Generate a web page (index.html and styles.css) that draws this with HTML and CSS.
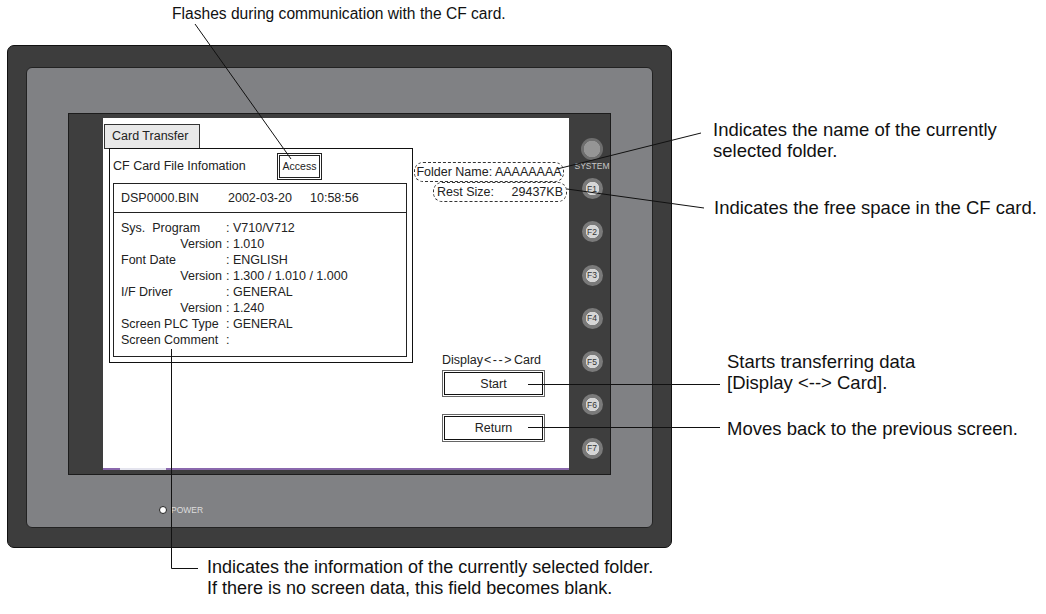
FILE: index.html
```html
<!DOCTYPE html>
<html lang="en">
<head>
  <meta charset="UTF-8" />
  <title>Card Transfer</title>
  <link rel="stylesheet" href="styles.css">
</head>
<body>
  <div class="page">
    <div class="device">
      <div class="bezel">
        <div class="frame">
          <div class="screen">
            <div class="screen-body">
              <div class="left">
                <div class="tab">Card Transfer</div>
                <div class="panel">
                  <div class="panel-head">
                    <span class="head-title">CF Card File Infomation</span>
                    <span class="access">Access</span>
                  </div>
                  <div class="file-row">
                    <span class="file-name">DSP0000.BIN</span>
                    <span class="file-date">2002-03-20</span>
                    <span>10:58:56</span>
                  </div>
                  <div class="info">
                    <div class="row"><span class="k">Sys.&nbsp; Program</span><span>: V710/V712</span></div>
                    <div class="row"><span class="k sub">Version</span><span>: 1.010</span></div>
                    <div class="row"><span class="k">Font Date</span><span>: ENGLISH</span></div>
                    <div class="row"><span class="k sub">Version</span><span>: 1.300 / 1.010 / 1.000</span></div>
                    <div class="row"><span class="k">I/F Driver</span><span>: GENERAL</span></div>
                    <div class="row"><span class="k sub">Version</span><span>: 1.240</span></div>
                    <div class="row"><span class="k">Screen PLC Type</span><span>: GENERAL</span></div>
                    <div class="row"><span class="k">Screen Comment</span><span>:</span></div>
                  </div>
                </div>
              </div>
              <div class="right">
                <div class="dash folder">Folder Name: AAAAAAAA</div>
                <div class="dash rest"><span>Rest Size:</span><span>29437KB</span></div>
                <div class="transfer">Display<span class="arrow">&lt;--&gt;</span>Card</div>
                <div class="btn">Start</div>
                <div class="btn btn-return">Return</div>
              </div>
            </div>
            <div class="screen-bar"></div>
          </div>
          <div class="keys">
            <div class="key key-system"></div>
            <div class="key-label">SYSTEM</div>
            <div class="key first">F1</div>
            <div class="key">F2</div>
            <div class="key">F3</div>
            <div class="key">F4</div>
            <div class="key">F5</div>
            <div class="key">F6</div>
            <div class="key">F7</div>
          </div>
        </div>
        <div class="power"><span class="led"></span>POWER</div>
      </div>
    </div>

    <p class="note note-top">Flashes during communication with the CF card.</p>
    <p class="note note-side note-folder">Indicates the name of the currently<br>selected folder.</p>
    <p class="note note-side note-free">Indicates the free space in the CF card.</p>
    <p class="note note-side note-start">Starts transferring data<br>[Display &lt;--&gt; Card].</p>
    <p class="note note-side note-return">Moves back to the previous screen.</p>
    <p class="note note-info">Indicates the information of the currently selected folder.<br>If there is no screen data, this field becomes blank.</p>

    <svg class="leaders" width="1046" height="614" viewBox="0 0 1046 614">
      <g stroke="#111" stroke-width="1" fill="none">
        <line x1="195" y1="24" x2="291" y2="159" />
        <line x1="557" y1="169" x2="701" y2="133" />
        <line x1="567" y1="189" x2="704" y2="208" />
        <line x1="528" y1="384.5" x2="720" y2="384.5" />
        <line x1="528" y1="427.5" x2="720" y2="427.5" />
        <polyline points="171.5,349 171.5,568.5 198,568.5" />
      </g>
    </svg>
  </div>
</body>
</html>
```

FILE: styles.css
```css
* {
  box-sizing: border-box;
}

body {
  margin: 0;
  background: #ffffff;
  font-family: "Liberation Sans", Arial, sans-serif;
  color: #1c1c1c;
}

.page {
  position: relative;
  width: 1046px;
  height: 614px;
  padding: 45px 0 0 7px;
  overflow: hidden;
}

/* device body */

.device {
  width: 665px;
  height: 503px;
  padding: 21px 0 0 18px;
  background: #3d3d3d;
  border: 1px solid #111;
  border-radius: 7px;
}

.bezel {
  width: 627px;
  height: 461px;
  padding: 45px 0 0 41px;
  background: #808184;
  border: 1px solid #222;
  border-radius: 6px;
}

.frame {
  display: flex;
  width: 543px;
  height: 362px;
  padding: 4px 0 0 34px;
  background: #3e3e3e;
  border: 1px solid #1c1c1c;
}

.screen {
  display: flex;
  flex-direction: column;
  width: 466px;
  height: 352px;
  background: #ffffff;
}

.screen-body {
  flex: 1;
  display: flex;
  font-size: 12.5px;
  color: #222;
}

.screen-bar {
  height: 2px;
  background: linear-gradient(to right, #8a68ad 17px, #e4e4ee 17px 63px, #8a68ad 63px);
}

.left {
  width: 310px;
  padding-top: 6px;
}

.tab {
  width: 96px;
  height: 25px;
  margin-left: 1px;
  padding-left: 7px;
  line-height: 23px;
  background: #e8e8e8;
  border: 1px solid #333;
}

.panel {
  width: 304px;
  height: 215px;
  margin: -1px 0 0 6px;
  padding: 0 5px 0 3px;
  border: 1px solid #111;
}

.panel-head {
  display: flex;
  align-items: center;
  height: 34px;
}

.head-title {
  width: 164px;
}

.access {
  display: flex;
  align-items: center;
  justify-content: center;
  width: 45px;
  height: 27px;
  font-size: 10.5px;
  border: 3px double #222;
}

.file-row {
  display: flex;
  align-items: center;
  width: 294px;
  height: 30px;
  padding-left: 7px;
  border: 1px solid #222;
}

.file-name {
  width: 107px;
}

.file-date {
  width: 82px;
}

.info {
  width: 294px;
  height: 145px;
  margin-top: -1px;
  padding: 7px 0 0 7px;
  border: 1px solid #222;
}

.row {
  display: flex;
  height: 16px;
  line-height: 16px;
  white-space: nowrap;
}

.k {
  width: 105px;
}

.k.sub {
  padding-right: 4px;
  text-align: right;
}

.right {
  display: flex;
  flex-direction: column;
  align-items: flex-start;
  padding-top: 44px;
}

.dash {
  height: 20px;
  line-height: 18px;
  border: 1px dashed #333;
  border-radius: 9px;
  white-space: nowrap;
}

.folder {
  width: 150px;
  margin-left: 1px;
  text-align: center;
}

.rest {
  display: flex;
  justify-content: space-between;
  width: 134px;
  margin-left: 20px;
  padding: 0 3px;
}

.transfer {
  margin: 150px 0 0 29px;
  line-height: 16px;
  white-space: nowrap;
}

.arrow {
  margin: 0 1px 0 1px;
  letter-spacing: 1.5px;
}

.btn {
  display: flex;
  align-items: center;
  justify-content: center;
  width: 103px;
  height: 27px;
  margin: 2px 0 0 29px;
  border: 1px solid #666;
  box-shadow: inset 0 0 0 1px #fff, inset 0 0 0 2px #111;
}

.btn-return {
  height: 28px;
  margin-top: 17px;
}

/* function keys */

.keys {
  display: flex;
  flex-direction: column;
  align-items: center;
  width: 41px;
  padding: 20px 0 0 5px;
}

.key {
  display: flex;
  align-items: center;
  justify-content: center;
  width: 21px;
  height: 21px;
  margin-top: 22.3px;
  font-size: 8.5px;
  color: #333;
  background: radial-gradient(circle, #d6d6d6 6.5px, #7a7a7a 7px);
  border-radius: 50%;
}

.key.first {
  margin-top: 7px;
}

.key-system {
  width: 22px;
  height: 22px;
  margin-top: 0;
  background: radial-gradient(circle, #959595 8px, #6e6e6e 8.5px);
}

.key-label {
  margin-top: 1px;
  font-size: 8.5px;
  line-height: 10px;
  color: #c8c8c8;
}

.power {
  display: flex;
  align-items: center;
  gap: 4px;
  margin: 30px 0 0 91px;
  font-size: 8.5px;
  color: #dddddd;
}

.led {
  width: 8px;
  height: 8px;
  background: #ffffff;
  border: 1px solid #222;
  border-radius: 50%;
}

/* callouts */

.note {
  position: absolute;
  margin: 0;
  font-size: 18px;
  line-height: 21px;
  color: #111;
  white-space: nowrap;
}

.note-side {
  font-size: 18.5px;
}

.note-top { left: 172px; top: 5px; font-size: 15.6px; line-height: 18px; }
.note-folder { left: 713px; top: 119px; }
.note-free { left: 714px; top: 197px; }
.note-start { left: 727px; top: 351px; }
.note-return { left: 727px; top: 418px; }
.note-info { left: 207px; top: 557px; }

.leaders {
  position: absolute;
  top: 0;
  left: 0;
  pointer-events: none;
}
```
